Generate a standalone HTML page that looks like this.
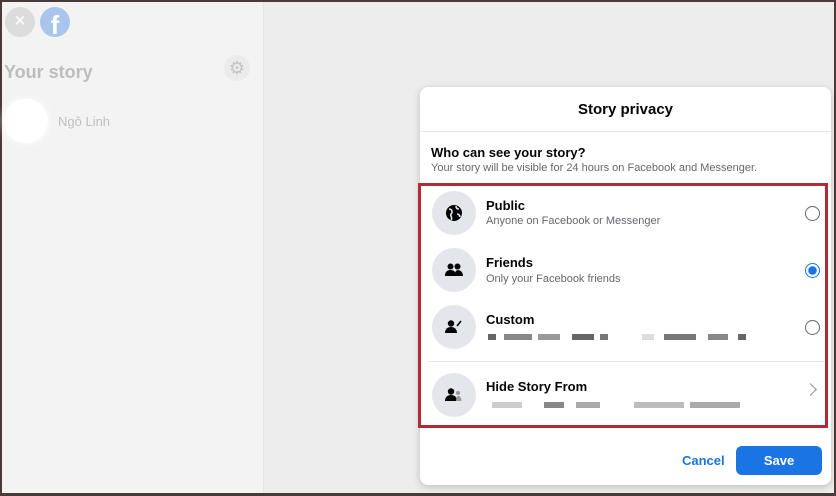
<!DOCTYPE html>
<html><head><style>
*{margin:0;padding:0;box-sizing:border-box}
body{width:836px;height:496px;overflow:hidden;font-family:"Liberation Sans",sans-serif;background:#4a3b38;position:relative}
.page{position:absolute;left:2px;top:2px;width:832px;height:491px;background:#ededed}
.left{position:absolute;left:0;top:0;width:262px;height:491px;background:#f3f3f3;border-right:1px solid #e6e6e6}
.abs{position:absolute}
.dlg{position:absolute;left:418px;top:85px;width:411px;height:398px;background:#fff;border-radius:8px;box-shadow:0 2px 8px rgba(0,0,0,.2)}
.t{position:absolute;font-size:13px;color:#050505;font-weight:bold}
.s{position:absolute;font-size:11px;color:#65676b}
.ic{position:absolute;left:12px;width:44px;height:44px;border-radius:50%;background:#e4e6eb;display:flex;align-items:center;justify-content:center}
.radio{position:absolute;left:385px;width:15px;height:15px;border:1.5px solid #65676b;border-radius:50%}
.px{position:absolute;background:#777;height:6px}
</style></head><body>
<div class="page">
 <div class="left">
  <div class="abs" style="left:3px;top:5px;width:30px;height:30px;border-radius:50%;background:#dcdcdc;color:#fff;font-size:20px;text-align:center;line-height:29px">×</div>
  <div class="abs" style="left:38px;top:5px;width:30px;height:30px;border-radius:50%;background:#a9c5ee;color:#fff;font-weight:bold;font-size:26px;text-align:center;line-height:36px;overflow:hidden">f</div>
  <div class="abs" style="left:2px;top:60px;font-size:18px;font-weight:bold;color:#bdbdbd">Your story</div>
  <div class="abs" style="left:222px;top:53px;width:26px;height:26px;border-radius:50%;background:#ebebeb;color:#c4c4c4;font-size:18px;text-align:center;line-height:26px">⚙</div>
  <div class="abs" style="left:2px;top:97px;width:44px;height:44px;border-radius:50%;background:#fff;box-shadow:0 0 8px #fff"></div>
  <div class="abs" style="left:56px;top:112px;font-size:13px;color:#c0c0c0">Ngô Linh</div>
 </div>
 <div class="dlg">
  <div class="t" style="left:0;width:100%;text-align:center;top:14px;font-size:15px">Story privacy</div>
  <div class="abs" style="left:0;top:44px;width:100%;height:1px;background:#e4e6eb"></div>
  <div class="t" style="left:11px;top:58px">Who can see your story?</div>
  <div class="s" style="left:11px;top:75px">Your story will be visible for 24 hours on Facebook and Messenger.</div>
  <div class="abs" style="left:-2px;top:96px;width:410px;height:245px;border:3px solid #b22a35"></div>
  <div class="ic" style="top:104px"><svg width="18" height="18" viewBox="0 0 18 18"><circle cx="9" cy="9" r="8" fill="#050505"/><path d="M4 5c2 0 3 1 3 3s-2 2-1 4 1 3 0 4M11 2c0 2 1 3 3 3M12 10c1 0 3 1 3 3" stroke="#e4e6eb" stroke-width="1.6" fill="none"/></svg></div>
  <div class="t" style="left:66px;top:111px">Public</div>
  <div class="s" style="left:66px;top:128px">Anyone on Facebook or Messenger</div>
  <div class="radio" style="top:119px"></div>
  <div class="ic" style="top:161px"><svg width="18" height="14" viewBox="0 0 18 14"><circle cx="5.5" cy="3.5" r="3" fill="#050505"/><circle cx="12.5" cy="3.5" r="3" fill="#050505"/><path d="M0 13c0-4 2-6 5.5-6s5.5 2 5.5 6zM10 13c0-3 0-5 2.5-6 3 0 5.5 2 5.5 6z" fill="#050505"/></svg></div>
  <div class="t" style="left:66px;top:168px">Friends</div>
  <div class="s" style="left:66px;top:186px">Only your Facebook friends</div>
  <div class="radio" style="top:176px;border-color:#1b74e4;background:radial-gradient(circle,#1b74e4 0 4px,#fff 4.5px)"></div>
  <div class="ic" style="top:218px"><svg width="18" height="14" viewBox="0 0 18 14"><circle cx="6" cy="3.5" r="3.2" fill="#050505"/><path d="M0 13c0-4 2.5-6 6-6s6 2 6 6z" fill="#050505"/><path d="M12 6l4-5" stroke="#050505" stroke-width="1.6"/></svg></div>
  <div class="t" style="left:66px;top:225px">Custom</div>
  <div class="px" style="left:68px;top:247px;width:8px;background:#666"></div>
  <div class="px" style="left:84px;top:247px;width:28px;background:#888"></div>
  <div class="px" style="left:118px;top:247px;width:22px;background:#999"></div>
  <div class="px" style="left:152px;top:247px;width:22px;background:#666"></div>
  <div class="px" style="left:180px;top:247px;width:8px;background:#777"></div>
  <div class="px" style="left:222px;top:247px;width:12px;background:#ddd"></div>
  <div class="px" style="left:244px;top:247px;width:32px;background:#777"></div>
  <div class="px" style="left:288px;top:247px;width:20px;background:#888"></div>
  <div class="px" style="left:318px;top:247px;width:8px;background:#666"></div>
  <div class="radio" style="top:233px"></div>
  <div class="abs" style="left:8px;top:274px;width:396px;height:1px;background:#e4e6eb"></div>
  <div class="ic" style="top:286px"><svg width="18" height="14" viewBox="0 0 18 14"><circle cx="6" cy="3.5" r="3.2" fill="#050505"/><path d="M0 13c0-4 2.5-6 6-6s6 2 6 6z" fill="#050505"/><circle cx="13" cy="5" r="2" fill="#999"/><path d="M11 13c0-3 1-5 2.5-5s3 2 3 5z" fill="#999"/></svg></div>
  <div class="t" style="left:66px;top:292px">Hide Story From</div>
  <div class="px" style="left:72px;top:315px;width:30px;background:#ccc"></div>
  <div class="px" style="left:124px;top:315px;width:20px;background:#888"></div>
  <div class="px" style="left:156px;top:315px;width:24px;background:#aaa"></div>
  <div class="px" style="left:214px;top:315px;width:50px;background:#bbb"></div>
  <div class="px" style="left:270px;top:315px;width:50px;background:#aaa"></div>
  <div class="abs" style="left:386px;top:298px;width:9px;height:9px;border-right:1.5px solid #8a8d91;border-top:1.5px solid #8a8d91;transform:rotate(45deg)"></div>
  <div class="abs" style="left:262px;top:366px;font-size:13px;font-weight:bold;color:#1b74e4">Cancel</div>
  <div class="abs" style="left:316px;top:359px;width:86px;height:29px;border-radius:6px;background:#1b74e4;color:#fff;font-weight:bold;font-size:13px;text-align:center;line-height:29px">Save</div>
 </div>
</div>
</body></html>
